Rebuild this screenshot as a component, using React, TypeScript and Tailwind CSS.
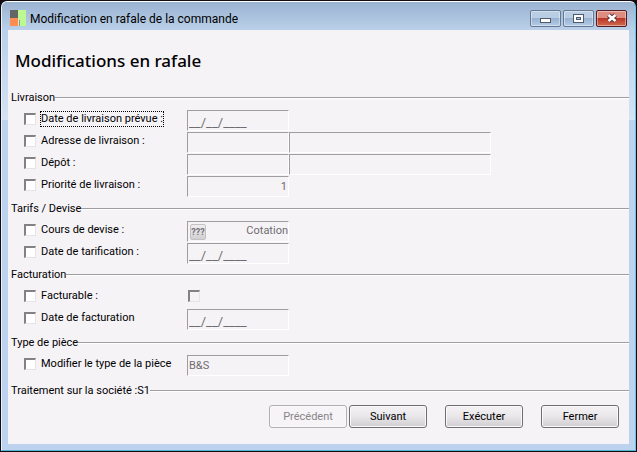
import React, { useState } from 'react';

const DATE_MASK = '__/__/____';

function AppIcon() {
  return (
    <svg width="16" height="16" viewBox="0 0 16 16" shapeRendering="crispEdges" aria-hidden="true">
      <rect width="8" height="8" fill="#626664" />
      <rect y="8" width="8" height="8" fill="#ff8d52" />
      <rect x="8" width="8" height="16" fill="#bdf892" />
      <rect x="8" y="8" width="1" height="8" fill="#e6e4c8" />
      <rect x="9" y="10" width="1" height="6" fill="#7fa47c" />
    </svg>
  );
}

function CaptionButton({ label, close, children }: { label: string; close?: boolean; children: React.ReactNode }) {
  return (
    <button
      type="button"
      aria-label={label}
      className={`flex items-center justify-center w-[31px] h-[17px] rounded-[2px] border shadow-[inset_0_0_0_1px_rgba(255,255,255,0.4)] bg-linear-to-b from-50% via-50% ${
        close
          ? 'border-[#561c22] from-[#dd8c80] via-[#bb3526] to-[#d0694f]'
          : 'border-[#66788f] from-[#b9cee5] via-[#98b3d1] to-[#b3cbe6]'
      }`}
    >
      {children}
    </button>
  );
}

function Section({ title, className = '', children }: { title: string; className?: string; children?: React.ReactNode }) {
  return (
    <section className={className}>
      <h2 className="flex items-center h-[22px] pl-[3px]">
        <span className="whitespace-pre">{title}</span>
        <span className="flex-1 h-[2px] bg-[#a09da1] border-b border-white" />
      </h2>
      {children}
    </section>
  );
}

const BOX =
  'appearance-none w-3 h-3 shrink-0 border-t-2 border-l-2 border-b border-r border-t-[#848184] border-l-[#848184] border-b-[#e6e3e6] border-r-[#e6e3e6]';

function Row({ id, label, focused, children }: { id: string; label: string; focused?: boolean; children?: React.ReactNode }) {
  const [checked, setChecked] = useState(false);
  return (
    <div className="flex items-start h-[22px] pl-4">
      <div className="flex items-center h-[19px] w-[163px] shrink-0">
        <input
          id={id}
          type="checkbox"
          checked={checked}
          onChange={(e) => setChecked(e.target.checked)}
          className={`${BOX} bg-white checked:bg-[#555]`}
        />
        <label
          htmlFor={id}
          className={`ml-1 leading-[14px] whitespace-nowrap border border-dotted ${focused ? 'border-black' : 'border-transparent'}`}
        >
          {label}
        </label>
      </div>
      {children}
    </div>
  );
}

function Field({ label, value = '', className = 'w-[102px]' }: { label: string; value?: string; className?: string }) {
  return (
    <input
      type="text"
      aria-label={label}
      defaultValue={value}
      disabled
      className={`h-[21px] mt-px px-px bg-[#f6f3f7] border border-t-[#a09da1] border-l-[#a09da1] border-b-white border-r-white text-[#6f6c70] ${className}`}
    />
  );
}

function DateField({ label }: { label: string }) {
  return <Field label={label} value={DATE_MASK} className="w-[102px] pt-1 text-[13px]" />;
}

function PushButton({ children, disabled }: { children: React.ReactNode; disabled?: boolean }) {
  return (
    <button
      type="button"
      disabled={disabled}
      className="w-[78px] h-[23px] pt-[2px] rounded-[3px] border border-[#706e72] bg-linear-to-b from-[#f4f2f4] from-0% via-[#e9e7ea] via-50% to-[#cfcdd0] text-center shadow-[inset_0_0_0_1px_#faf9fa] disabled:border-[#b2b0b3] disabled:bg-none disabled:bg-[#f6f4f6] disabled:text-[#88858a]"
    >
      {children}
    </button>
  );
}

export default function App() {
  return (
    <div className="min-h-screen flex flex-col p-px bg-[#100e14] text-black text-[11px] font-['Roboto','Liberation_Sans',sans-serif]">
      <div className="flex-1 flex flex-col px-[6px] pb-[6px] rounded-t-md border border-t-white border-l-[#e9f1fa] border-r-[#5ccbe6] border-b-[#4fb4cc] bg-[linear-gradient(to_bottom,#9ab3d1_0,#bad0ea_28px,#d4e3f5_118px,#bcd2ee_118px)]">
        <header className="flex items-center h-7 pt-1 px-[2px]">
          <AppIcon />
          <h1 className="ml-1 pt-px flex-1 text-[12px]">Modification en rafale de la commande</h1>
          <div className="flex gap-[2px]">
            <CaptionButton label="Réduire">
              <svg width="11" height="9" viewBox="0 0 11 9" shapeRendering="crispEdges">
                <rect x="0" y="4" width="11" height="5" rx="1" fill="#4f5b6b" />
                <rect x="1" y="5" width="9" height="3" fill="#fff" />
              </svg>
            </CaptionButton>
            <CaptionButton label="Agrandir">
              <svg width="11" height="9" viewBox="0 0 11 9" shapeRendering="crispEdges">
                <rect x="0" y="0" width="11" height="9" rx="1" fill="#4f5b6b" />
                <rect x="1" y="1" width="9" height="7" fill="#fff" />
                <rect x="3" y="3" width="5" height="3" fill="#4f5b6b" />
                <rect x="4" y="4" width="3" height="1" fill="#a6bfdb" />
              </svg>
            </CaptionButton>
            <CaptionButton label="Fermer la fenêtre" close>
              <svg width="12" height="10" viewBox="0 0 12 10">
                <path d="M2.5 2L9.5 8M9.5 2L2.5 8" stroke="#5c3238" strokeWidth="4.6" />
                <path d="M2.5 2L9.5 8M9.5 2L2.5 8" stroke="#fff" strokeWidth="2.6" />
              </svg>
            </CaptionButton>
          </div>
        </header>

        <main className="flex-1 bg-[#f6f3f7]">
          <div className="flex items-center h-[57px] pl-[7px] pt-1 text-[17px] font-medium font-['Noto_Sans',sans-serif]">
            Modifications en rafale
          </div>

          <Section title="Livraison">
            <Row id="date-livraison" label="Date de livraison prévue :" focused>
              <DateField label="Date de livraison prévue" />
            </Row>
            <Row id="adresse" label="Adresse de livraison :">
              <Field label="Code adresse" />
              <Field label="Adresse de livraison" className="w-[202px]" />
            </Row>
            <Row id="depot" label="Dépôt :">
              <Field label="Code dépôt" />
              <Field label="Dépôt" className="w-[202px]" />
            </Row>
            <Row id="priorite" label="Priorité de livraison :">
              <Field label="Priorité de livraison" value="1" className="w-[102px] text-right" />
            </Row>
          </Section>

          <Section title="Tarifs / Devise" className="mt-px">
            <Row id="cours" label="Cours de devise :">
              <div className="flex items-center justify-between w-[102px] h-[21px] mt-px pl-[2px] border border-t-[#a09da1] border-l-[#a09da1] border-b-white border-r-white text-[#6f6c70]">
                <button
                  type="button"
                  disabled
                  aria-label="Devise"
                  className="w-4 h-4 rounded-[2px] border border-[#c4c1c5] bg-linear-to-b from-[#efedf0] to-[#d2d0d3] text-[9px] leading-[14px] font-bold text-[#77747a]"
                >
                  ???
                </button>
                <span>Cotation</span>
              </div>
            </Row>
            <Row id="date-tarification" label="Date de tarification :">
              <DateField label="Date de tarification" />
            </Row>
          </Section>

          <Section title="Facturation">
            <Row id="facturable" label="Facturable :">
              <div className="flex items-center h-[19px] pl-px">
                <input type="checkbox" disabled aria-label="Facturable" className={`${BOX} bg-[#f6f3f7]`} />
              </div>
            </Row>
            <Row id="date-facturation" label="Date de facturation">
              <DateField label="Date de facturation" />
            </Row>
          </Section>

          <Section title="Type de pièce" className="mt-[2px]">
            <Row id="type-piece" label="Modifier le type de la pièce">
              <Field label="Type de la pièce" value="B&S" />
            </Row>
          </Section>

          <Section title="Traitement sur la société :S1" className="mt-1" />

          <footer className="flex justify-end pt-[3px] pr-[10px] pb-4">
            <div className="flex gap-[2px]">
              <PushButton disabled>Précédent</PushButton>
              <PushButton>Suivant</PushButton>
            </div>
            <div className="flex gap-[18px] ml-[18px]">
              <PushButton>Exécuter</PushButton>
              <PushButton>Fermer</PushButton>
            </div>
          </footer>
        </main>
      </div>
    </div>
  );
}
